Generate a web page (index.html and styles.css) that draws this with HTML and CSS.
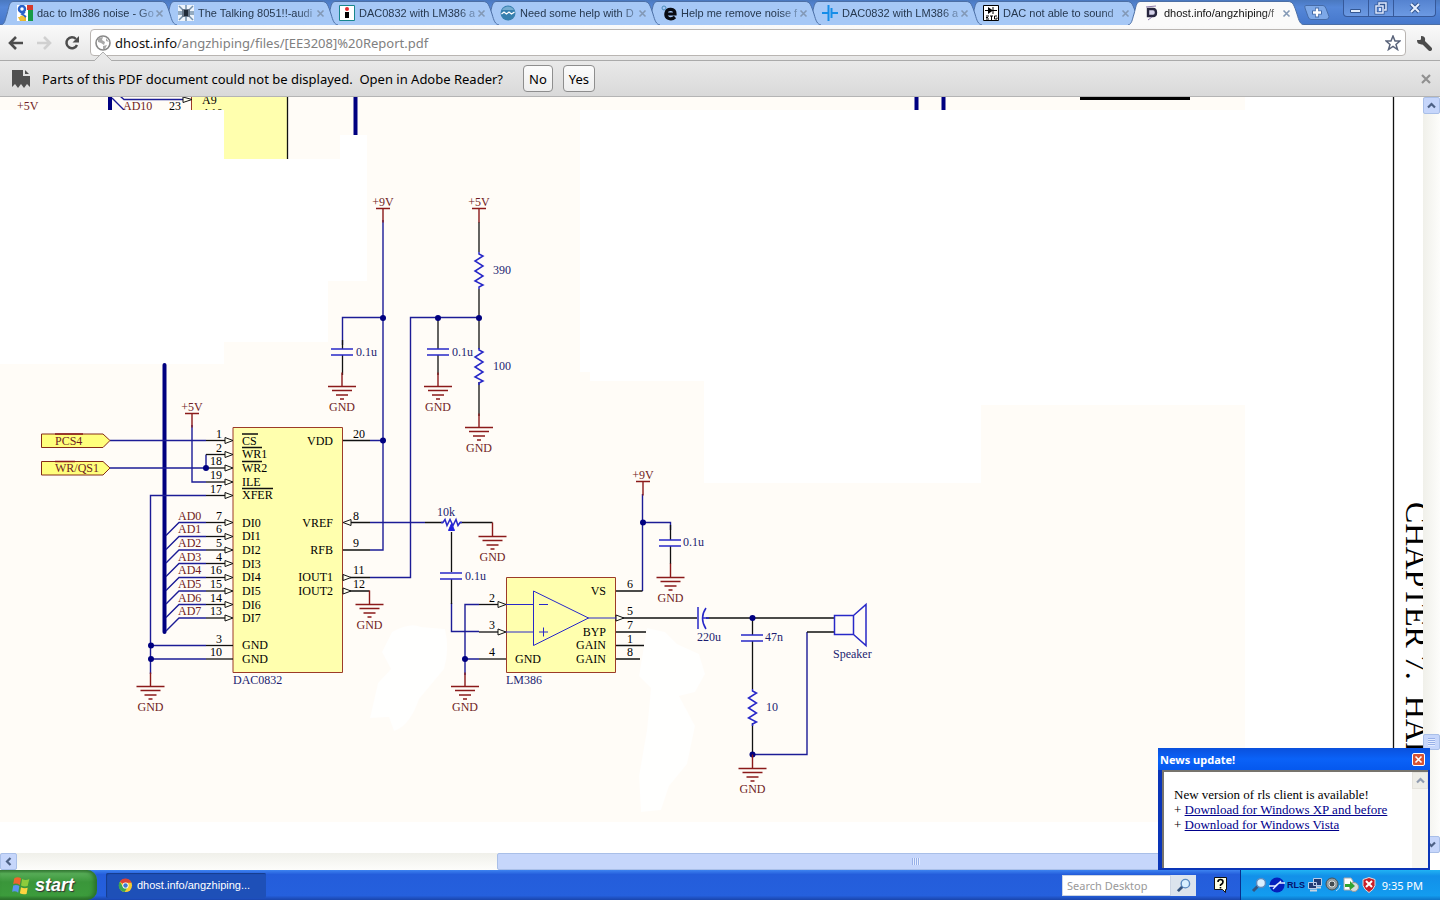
FILE: index.html
```
<!DOCTYPE html>
<html lang="en">
<head>
	<meta charset="UTF-8">
	<meta name="viewport" content="width=device-width, initial-scale=1">
	<title>dhost.info/angzhiping/files/[EE3208]%20Report.pdf</title>
	<link rel="stylesheet" href="styles.css">
</head>
<body>

<!-- shared shapes -->
<svg class="defs" aria-hidden="true">
	<symbol id="tab-shape" viewBox="0 0 176 25" preserveAspectRatio="none">
		<path d="M0 25 C4 24 4 20 6 14 C8 7 8 2 12 1.500 H160 C165 1.500 166 5 169 14 C171 21 172 24 176 25" stroke="#4c6fa5" stroke-width="1"/>
	</symbol>
	<symbol id="cross" viewBox="0 0 9 9"><path d="M1.500 1.500 L7.500 7.500 M7.500 1.500 L1.500 7.500" fill="none" stroke="currentColor" stroke-width="1.600"/></symbol>
	<symbol id="arrow" viewBox="0 0 9 9"><path d="M1 6.500 L4.500 3 L8 6.500" fill="none" stroke="#4d6185" stroke-width="2.200"/></symbol>
	<symbol id="magnifier" viewBox="0 0 16 16"><path d="M7 9 L2 14" stroke="#35557f" stroke-width="3"/><circle cx="10" cy="6" r="4.500" fill="#d9f0ff" stroke="#5b8bc0" stroke-width="1.500"/></symbol>
</svg>

<header class="tabbar">
	<nav class="tabs">
		<div class="tab">
			<svg class="shape"><use href="#tab-shape"/></svg>
			<svg class="fav" viewBox="0 0 16 16"><path fill="#fff" d="M0 0h16v16H0z"/><path fill="#d63a2c" d="M10 0h6v5h-6z"/><path fill="#169b46" d="M11 5h5v11h-5z"/><path fill="#eab52a" d="M1 12h8v4H3z"/><circle cx="5" cy="4" r="3" fill="none" stroke="#2862c9" stroke-width="2.500"/><path d="M8 7 5 9l4 3" fill="none" stroke="#2862c9" stroke-width="2"/><circle cx="5" cy="13" r="2.500" fill="#f0c23c"/></svg>
			<a href="#">dac to lm386 noise - Go</a>
			<button aria-label="Close tab"><svg><use href="#cross"/></svg></button>
		</div>
		<div class="tab">
			<svg class="shape"><use href="#tab-shape"/></svg>
			<svg class="fav" viewBox="0 0 16 16"><path fill="#eef4fb" d="M0 0h16v16H0z"/><path d="M1 1l4 4M15 1l-4 4M1 15l4-4M15 15l-4-4M0 7h4M0 9h4M12 7h4M12 9h4M8 0v4M8 12v4" stroke="#7591ac" stroke-width="1.500"/><path fill="#68788a" d="M4 4h8v8H4z"/><path fill="#202b38" d="M6 5h4v6H6z"/></svg>
			<a href="#">The Talking 8051!!-audi</a>
			<button aria-label="Close tab"><svg><use href="#cross"/></svg></button>
		</div>
		<div class="tab">
			<svg class="shape"><use href="#tab-shape"/></svg>
			<svg class="fav" viewBox="0 0 16 16"><path fill="#fff" stroke="#17868c" d="M.5.5h15v15H.5z"/><circle cx="8" cy="4" r="2" fill="#e12c32"/><path d="M6 7h4v6H6z"/></svg>
			<a href="#">DAC0832 with LM386 a</a>
			<button aria-label="Close tab"><svg><use href="#cross"/></svg></button>
		</div>
		<div class="tab">
			<svg class="shape"><use href="#tab-shape"/></svg>
			<svg class="fav" viewBox="0 0 16 16"><circle cx="8" cy="8" r="7.500" fill="#367fae"/><path d="M2 5a7 7 0 0 1 12 0" fill="#75acd0"/><path d="M1.500 9l2.500-2 2.500 2 2.500-2 2.500 2 3-2" fill="none" stroke="#fff" stroke-width="1.300"/></svg>
			<a href="#">Need some help with D</a>
			<button aria-label="Close tab"><svg><use href="#cross"/></svg></button>
		</div>
		<div class="tab">
			<svg class="shape"><use href="#tab-shape"/></svg>
			<svg class="fav" viewBox="0 0 16 16"><path d="M14 12c-4 4-10 1-9-4s9-5 9 1H6" fill="none" stroke="#080b12" stroke-width="3.200"/><circle cx="3" cy="3" r="2" fill="none" stroke="#4c8cb8"/></svg>
			<a href="#">Help me remove noise f</a>
			<button aria-label="Close tab"><svg><use href="#cross"/></svg></button>
		</div>
		<div class="tab">
			<svg class="shape"><use href="#tab-shape"/></svg>
			<svg class="fav" viewBox="0 0 16 16"><path d="M0 8h6M10 8h6M6.500 0v16M9.500 3v10" stroke="#158de8" stroke-width="2"/></svg>
			<a href="#">DAC0832 with LM386 a</a>
			<button aria-label="Close tab"><svg><use href="#cross"/></svg></button>
		</div>
		<div class="tab">
			<svg class="shape"><use href="#tab-shape"/></svg>
			<svg class="fav" viewBox="0 0 16 16"><path fill="#fff" stroke="#000" d="M.5.5h15v15H.5z"/><path d="M2 5.500h12M10 2v7M3 11h3M3 12.500h2M3 14h3M7 11h3M8.500 11v4M14 11h-2.500v3H14v-1.500" stroke="#000" fill="none"/><path d="M5 2l5 3.500L5 9z"/></svg>
			<a href="#">DAC not able to sound</a>
			<button aria-label="Close tab"><svg><use href="#cross"/></svg></button>
		</div>
		<div class="tab active">
			<svg class="shape"><use href="#tab-shape"/></svg>
			<svg class="fav" viewBox="0 0 16 16"><path d="M4 4h5q3 0 3 3.500T9 11H4z" fill="#d5d2ea" stroke="#27263f" stroke-width="2.400"/><path d="M2 2l10-1M4 15l4-3" stroke="#8b78a9"/></svg>
			<a href="#">dhost.info/angzhiping/f</a>
			<button aria-label="Close tab"><svg><use href="#cross"/></svg></button>
		</div>
	</nav>
	<button class="newtab" aria-label="New tab"><svg viewBox="0 0 26 15"><path d="M2 .5h17q2 0 3 3l3 8q0 3-3 3H7q-2 0-3-3L1 3Q0 .5 2 .5z" fill="#7da8e7" stroke="#466ca8"/><path d="M8 7.500h10M13 2.500v10" stroke="#446ba8" stroke-width="4"/><path d="M9 7.500h8M13 3.500v8" stroke="#fff" stroke-width="2.400"/></svg></button>
	<div class="wincontrols">
		<button aria-label="Minimize"><svg viewBox="0 0 14 14"><path d="M1.500 8.500h10v3h-10z" fill="#e2edfc" stroke="#345792"/></svg></button>
		<button aria-label="Restore"><svg viewBox="0 0 14 14"><path d="M5 4V2h7v7h-2M2 5h7v7H2z" fill="none" stroke="#345792" stroke-width="3"/><path d="M5 4V2h7v7h-2M2 5h7v7H2z" fill="none" stroke="#dfeaff" stroke-width="1.500"/><path fill="#dfeaff" d="M5 7h2v3H5z"/></svg></button>
		<button class="wide" aria-label="Close"><svg viewBox="0 0 14 14"><path d="M3 3l8 8M11 3l-8 8" stroke="#345792" stroke-width="4"/><path d="M3 3l8 8M11 3l-8 8" stroke="#e7f0ff" stroke-width="2"/></svg></button>
	</div>
</header>

<div class="toolbar">
	<button aria-label="Back"><svg viewBox="0 0 16 16"><path d="M15 8H3M8 2L2 8l6 6" fill="none" stroke="#4d4d4d" stroke-width="2.600"/></svg></button>
	<button aria-label="Forward"><svg viewBox="0 0 16 16"><path d="M1 8h12M8 2l6 6-6 6" fill="none" stroke="#d0d0d0" stroke-width="2.600"/></svg></button>
	<button aria-label="Reload"><svg viewBox="0 0 16 16"><path d="M13 10a5.500 5.500 0 1 1-1-6" fill="none" stroke="#4d4d4d" stroke-width="2.500"/><path d="M15 1v6.500H8.500z" fill="#4d4d4d"/></svg></button>
	<div class="omnibox">
		<svg class="globe" viewBox="0 0 16 16"><circle cx="8" cy="8" r="7" fill="#fff" stroke="#888" stroke-width="1.600"/><path d="M3 3l5-1-1 3 3 2-1 3-3-2-3-1zM11 3l3 4-3-1zM8 11l4-1-2 4H8z" fill="#a9a9a9"/></svg>
		<a class="url" href="#">dhost.info<span>/angzhiping/files/[EE3208]%20Report.pdf</span></a>
		<button aria-label="Bookmark"><svg viewBox="0 0 16 16"><path d="M8 1l2 5h5l-4 3.500 1.500 5L8 11.500l-4.500 3 1.500-5L1 6h5z" fill="#fff" stroke="#59637a" stroke-width="1.500"/></svg></button>
	</div>
	<button aria-label="Settings"><svg viewBox="0 0 16 16"><path d="M6 6l8 8" stroke="#4c4c4c" stroke-width="4" stroke-linecap="round"/><path d="M1 5L5 5 5 1Q10 1 9 6T4 9Q1 9 1 5z" fill="#4c4c4c"/></svg></button>
</div>

<div class="infobar">
	<svg class="notch" viewBox="0 0 18 9"><path d="M0 9L9 0l9 9" fill="#e9e9e9" stroke="#b0b0b0"/></svg>
	<svg class="pdficon" viewBox="0 0 18 20"><path d="M0 1h11v6h7v11l-3-3-3 4-3-4-3 4-3-4-3 3z" fill="#505050"/><path d="M13 1l4 4h-4z" fill="#505050"/></svg>
	<p>Parts of this PDF document could not be displayed.&nbsp; Open in Adobe Reader?</p>
	<button>No</button>
	<button>Yes</button>
	<button class="dismiss" aria-label="Dismiss"><svg><use href="#cross"/></svg></button>
</div>

<main class="viewer">
	<div class="page">
	<svg class="schematic" width="1423" height="756" viewBox="0 97 1423 756">
		<defs>
			<clipPath id="strip"><path d="M0 97h1245v13H0z"/></clipPath>
			<g id="gnd"><path class="red" d="M0-14V0M-14 0h28M-10 4h20M-6 8.500h12M-2 12.500h4"/><text class="t-red mid" y="24">GND</text></g>
			<g id="pwr"><path class="red" d="M-7 0H7M0 0v14"/></g>
			<g id="pin"><path class="blk" d="M-27 0H0"/></g>
			<g id="pin-in"><path class="blk" d="M-27 0h19"/><path class="tri" d="M-8-3L0 0-8 3z"/></g>
			<g id="tap"><path class="wire" d="M-67 13l13-13h27"/><use href="#pin-in"/></g>
			<g id="cap"><path class="part" d="M-11-3h22M-11 3h22"/></g>
			<g id="res"><path class="part" d="M0-18v2l4 2-8 5 8 5-8 5 8 5-8 5 8 4-4 2v2"/></g>
		</defs>

		<!-- paper tint -->
		<path class="paper" d="M0 97h1245v725H0z"/>
		<path class="blank" d="M0 110H224V159H340V135H367V281H328V342H224V364H0z"/>
		<path class="blank" d="M580 110H1245V405H981V483H704V381H590V372H580z"/>
		<path class="blank soft" d="M392 632q18-10 29-5l24 2q5 20-1 40l-25 30q-9 27-25 32l-5-14-19 1 8-35 13-14-9-17z"/>
		<path class="blank soft" d="M647 628l18 4 12 12 22 10 6 20-10 18-16 4 16 30-8 38-18 22-8 24-20 2-2-36 8-46 4-42-12-12z"/>

		<!-- cut off parts at the top -->
		<g clip-path="url(#strip)">
			<path class="chip" d="M191.500 90h96v80h-96z"/>
			<path class="bus" d="M110 90v30"/>
			<path class="wire" d="M112 98l12 12M120 96l4 3.500h60"/>
			<path class="tri" d="M183 97l9 2.500-9 3z"/>
			<text class="t-red" x="17" y="110">+5V</text>
			<text class="t-red" x="123" y="110">AD10</text>
			<text x="169" y="110">23</text>
			<text x="202" y="104">A9</text>
			<text x="202" y="117">A10</text>
			<path class="bus" d="M916.500 97v20M943.500 97v20"/>
		</g>
		<path fill="#ffffae" d="M224 97h63v62h-63z"/>
		<path class="blk" d="M287.500 97v62"/>
		<path class="bus" d="M355.500 97v38"/>
		<path fill="#000" d="M1080 97h110v3h-110z"/>

		<!-- wires -->
		<path class="bus" d="M164.500 365v267" stroke-linecap="round"/>
		<path class="wire" d="M110 440.500h96M110 468h96M206 468v-13.500M192 425v57h14M206 495.500h-55.500V674M150.500 645.500H206M150.500 659H206"/>
		<path class="wire" d="M383 220v330H370M342.500 345v-27.500H383M370 440.500h13M370 522.500h55M370 577.500h40.500v-260H479M670.500 530v-7.500h-28M642.500 494v97"/>
		<path class="wire" d="M451.500 603v28.500H479M479 604.500h-14V675M465 659h14M752.500 754.500H807V632"/>
		<path class="blk" d="M342.500 440.500H370M350 522.500h20M342.500 550H370M350 577.500h20M350 591h19.500M425 522.500h18M460 522.500h32.500M451.500 532v40M451.500 579v25M342.500 340v9M342.500 355v20M438 318v31M438 355v20M479 222v30M479 289v60M479 382v34M615.500 591h27M622 618h75M615.500 632H646M615.500 645.500H644M615.500 659H640M670.500 525v15M670.500 546v18M706 618H835M807 632h28M752.500 618v17M752.500 641v48M752.500 723v32"/>

		<!-- DAC0832 -->
		<path class="chip" d="M233 427.500h109.500v245H233z"/>
		<g>
			<use href="#pin-in" x="233" y="440.500"/><use href="#pin-in" x="233" y="454.500"/><use href="#pin-in" x="233" y="468"/><use href="#pin-in" x="233" y="482"/><use href="#pin-in" x="233" y="495.500"/>
			<use href="#tap" x="233" y="522.500"/><use href="#tap" x="233" y="536.500"/><use href="#tap" x="233" y="550"/><use href="#tap" x="233" y="563.500"/><use href="#tap" x="233" y="577.500"/><use href="#tap" x="233" y="591"/><use href="#tap" x="233" y="604.500"/><use href="#tap" x="233" y="618"/>
			<use href="#pin" x="233" y="645.500"/><use href="#pin" x="233" y="659"/>
			<path class="tri" d="M351 519.500l-8 3 8 3zM343 574.500l8 3-8 3zM343 588l8 3-8 3z"/>
		</g>
		<path class="blk" d="M242 434h16M242 447.500h20M242 461.500h20M242 488.500h31"/>
		<g>
			<text x="242" y="445">CS</text><text x="242" y="458">WR1</text><text x="242" y="472">WR2</text><text x="242" y="486">ILE</text><text x="242" y="499">XFER</text>
			<text x="242" y="527">DI0</text><text x="242" y="540">DI1</text><text x="242" y="554">DI2</text><text x="242" y="568">DI3</text><text x="242" y="581">DI4</text><text x="242" y="595">DI5</text><text x="242" y="609">DI6</text><text x="242" y="622">DI7</text>
			<text x="242" y="649">GND</text><text x="242" y="663">GND</text>
		</g>
		<g class="end">
			<text x="333" y="445">VDD</text><text x="333" y="527">VREF</text><text x="333" y="554">RFB</text><text x="333" y="581">IOUT1</text><text x="333" y="595">IOUT2</text>
			<text x="222" y="438">1</text><text x="222" y="452">2</text><text x="222" y="465">18</text><text x="222" y="479">19</text><text x="222" y="493">17</text>
			<text x="222" y="520">7</text><text x="222" y="533">6</text><text x="222" y="547">5</text><text x="222" y="561">4</text><text x="222" y="574">16</text><text x="222" y="588">15</text><text x="222" y="602">14</text><text x="222" y="615">13</text>
			<text x="222" y="643">3</text><text x="222" y="656">10</text>
		</g>
		<text x="353" y="438">20</text><text x="353" y="520">8</text><text x="353" y="547">9</text><text x="353" y="574">11</text><text x="353" y="588">12</text>
		<g class="t-red">
			<text x="178" y="520">AD0</text><text x="178" y="533">AD1</text><text x="178" y="547">AD2</text><text x="178" y="561">AD3</text><text x="178" y="574">AD4</text><text x="178" y="588">AD5</text><text x="178" y="602">AD6</text><text x="178" y="615">AD7</text>
		</g>
		<path class="port" d="M41.500 434H103l7 6.500-7 7H41.500zM41.500 461.500H103l7 6.500-7 7H41.500z"/>
		<path class="red" d="M55 434h28M55 461.500h20"/>
		<text class="t-red" x="55" y="445">PCS4</text><text class="t-red" x="55" y="472">WR/QS1</text>
		<text class="t-blue" x="233" y="684">DAC0832</text>

		<!-- LM386 -->
		<path class="chip" d="M506.500 577.500h109v95h-109z"/>
		<use href="#pin-in" x="506" y="604.500"/><use href="#pin-in" x="506" y="632"/><use href="#pin" x="506" y="659"/>
		<path class="tri" d="M616 615l8 3-8 3z"/>
		<path class="part thin" d="M533.500 591v54.500L588.500 618zM506 604.500h27M506 632h27M588 618h28M539 604.500h9M539 632h9M543.500 627.500v9"/>
		<text x="489" y="602">2</text><text x="489" y="629">3</text><text x="489" y="656">4</text><text x="515" y="663">GND</text>
		<g class="end"><text x="606" y="595">VS</text><text x="606" y="636">BYP</text><text x="606" y="649">GAIN</text><text x="606" y="663">GAIN</text></g>
		<text x="627" y="588">6</text><text x="627" y="615">5</text><text x="627" y="629">7</text><text x="627" y="643">1</text><text x="627" y="656">8</text>
		<text class="t-blue" x="506" y="684">LM386</text>

		<!-- parts -->
		<use href="#cap" x="342" y="352"/><use href="#cap" x="438" y="352"/><use href="#cap" x="451" y="576"/><use href="#cap" x="670" y="543"/><use href="#cap" x="752" y="638"/>
		<use href="#res" x="479" y="270"/><use href="#res" x="479" y="366"/><use href="#res" x="752.500" y="707"/>
		<path class="part" d="M441 522.500h2l2-3 2 6 3-6 3 6 3-6 2 6 2-3h2M698 607v22M706 608q-7 10 0 21M703 618h6"/>
		<path d="M451.500 523.500l3 7h-6z" fill="#22d" stroke="#22d"/>
		<path class="part" d="M834.500 615.500h19v19h-19zM853.500 615.500l12.500-11v41l-12.500-11"/>
		<g fill="#000080"><circle cx="383" cy="318" r="3"/><circle cx="438" cy="318" r="3"/><circle cx="479" cy="318" r="3"/><circle cx="383" cy="440.500" r="3"/><circle cx="206" cy="468" r="3"/><circle cx="151" cy="645.500" r="3"/><circle cx="151" cy="659" r="3"/><circle cx="643" cy="522.500" r="3"/><circle cx="465" cy="659" r="3"/><circle cx="752.500" cy="618" r="3"/><circle cx="752.500" cy="754.500" r="3"/></g>
		<use href="#pwr" x="383" y="208.500"/><use href="#pwr" x="479" y="208.500"/><use href="#pwr" x="192" y="413.500"/><use href="#pwr" x="643" y="481.500"/>
		<g class="t-red mid"><text x="383" y="206">+9V</text><text x="479" y="206">+5V</text><text x="192" y="411">+5V</text><text x="643" y="479">+9V</text></g>
		<use href="#gnd" x="342" y="386.500"/><use href="#gnd" x="438" y="386.500"/><use href="#gnd" x="479" y="427.500"/><use href="#gnd" x="369.500" y="604.500"/><use href="#gnd" x="492.500" y="536.500"/><use href="#gnd" x="150.500" y="686.500"/><use href="#gnd" x="465" y="686.500"/><use href="#gnd" x="670.500" y="577.500"/><use href="#gnd" x="752.500" y="768.500"/>
		<g class="t-blue">
			<text x="356" y="356">0.1u</text><text x="452" y="356">0.1u</text><text x="493" y="274">390</text><text x="493" y="370">100</text><text x="437" y="516">10k</text><text x="465" y="580">0.1u</text><text x="683" y="546">0.1u</text><text x="697" y="641">220u</text><text x="765" y="641">47n</text><text x="766" y="711">10</text><text x="833" y="658">Speaker</text>
		</g>

		<path class="blk" d="M1393.500 97v756"/>
		<text class="chapter" transform="translate(1406 502) rotate(90)">CHAPTER 7.&nbsp; HAR</text>
	</svg>
	</div>
	<div class="vscroll">
		<button aria-label="Scroll up"><svg><use href="#arrow"/></svg></button>
		<span class="thumb"></span>
		<button class="down" aria-label="Scroll down"><svg><use href="#arrow"/></svg></button>
	</div>
	<div class="hscroll">
		<button class="left" aria-label="Scroll left"><svg><use href="#arrow"/></svg></button>
		<span class="thumb"></span>
	</div>
</main>

<footer class="taskbar">
	<button class="start"><svg viewBox="0 0 18 18"><path d="M3 3q3-2 6 0L8 9Q5 7 2 8z" fill="#f0642d"/><path d="M10 3.500q3 2 6.500 0L15 10q-3 1-6-.5z" fill="#8ccc3c"/><path d="M2 9.500q3-1 5.500.5L6.500 16Q4 14 1 15z" fill="#5a95ee"/><path d="M9 11q3 1.500 6 .5L14 17q-3 1-6-.5z" fill="#fcd440"/></svg>start</button>
	<button class="task"><svg viewBox="0 0 16 16"><circle cx="8" cy="8" r="7" fill="#f4cc32"/><path d="M8 8L2 4a7 7 0 0 1 12.500 1H8z" fill="#dc4335"/><path d="M2 4a7 7 0 0 0 5 11l3-5-5-1z" fill="#3ba651"/><circle cx="8" cy="8" r="3.300" fill="#fff"/><circle cx="8" cy="8" r="2.400" fill="#3e77cf"/></svg>dhost.info/angzhiping...</button>
	<div class="search">
		<input type="text" placeholder="Search Desktop" aria-label="Search Desktop">
		<button aria-label="Search"><svg viewBox="0 0 16 16"><use href="#magnifier"/></svg></button>
	</div>
	<button class="help" aria-label="Help"><svg viewBox="0 0 14 16"><path d="M.5.5h12v12h-1v3l-3-3h-8z" fill="#ffffe4" stroke="#111"/><path d="M4 5q0-2.500 2.500-2.500T9 5q0 1.500-2.500 3v1M6.500 10v1.500" fill="none" stroke="#000" stroke-width="1.600"/></svg></button>
	<div class="tray">
		<svg viewBox="0 0 16 16"><use href="#magnifier"/></svg>
		<svg viewBox="0 0 16 16"><circle cx="8" cy="8" r="7.500" fill="#0420bd"/><path d="M0 9h6l4-3h6M4 12l8-8" fill="none" stroke="#e2edff" stroke-width="1.300"/></svg>
		<b>RLS</b>
		<svg viewBox="0 0 16 16"><path fill="#213b73" stroke="#b9cde8" d="M6.500 1.500h8v7h-8zM1.500 5.500h8v6h-8z"/><path d="M3 13.500h7M9 10.500h5" stroke="#cbd3df" stroke-width="2"/></svg>
		<svg viewBox="0 0 16 16"><circle cx="7" cy="7" r="6" fill="#939b9e" stroke="#465256"/><circle cx="7" cy="7" r="3" fill="#424a50" stroke="#dce1e2"/><path d="M11 14q4-2 4-6" fill="none" stroke="#b1dfff"/></svg>
		<svg viewBox="0 0 16 16"><path d="M1 1h7l2 3v9H1z" fill="#fff" stroke="#aaa"/><circle cx="11" cy="10" r="4.500" fill="#d8ded9" stroke="#999"/><path d="M2 7h5V4l5 5-5 4v-3H2z" fill="#31a431"/></svg>
		<svg viewBox="0 0 16 16"><path d="M8 .5l6 2v6q-1 4-6 7-5-3-6-7v-6z" fill="#c91e28" stroke="#ddd"/><path d="M5 4l6 6M11 4l-6 6" stroke="#fff" stroke-width="2"/></svg>
		<time>9:35 PM</time>
	</div>
</footer>

<aside class="popup">
	<header><h2>News update!</h2><button aria-label="Close"><svg><use href="#cross"/></svg></button></header>
	<div class="popup-body">
		<div class="news">
			<p>New version of rls client is available!</p>
			<p>+ <a href="#">Download for Windows XP and before</a></p>
			<p>+ <a href="#">Download for Windows Vista</a></p>
		</div>
		<div class="popup-scroll"><button aria-label="Scroll up"><svg><use href="#arrow"/></svg></button></div>
	</div>
</aside>

</body>
</html>
```
FILE: styles.css
```
* {
	box-sizing: border-box;
}

body {
	margin: 0;
	height: 100vh;
	display: flex;
	flex-direction: column;
	overflow: hidden;
	background: #fff;
	font-family: "Noto Sans", Tahoma, sans-serif;
	font-size: 12px;
}

button {
	padding: 0;
	border: 0;
	background: none;
	font: inherit;
	display: flex;
	align-items: center;
	justify-content: center;
}

a {
	color: inherit;
	text-decoration: none;
}

p {
	margin: 0;
}

.defs {
	position: absolute;
	width: 0;
	height: 0;
}

/* tabs */
.tabbar {
	display: flex;
	height: 25px;
	flex: none;
	background: linear-gradient(#4a78bf, #5587d8 30%, #4678cc);
	border-bottom: 1px solid #4c6fa5;
}

.tabs {
	display: flex;
	flex: 0 1 1304px;
	min-width: 0;
	padding-left: 1px;
}

.tab {
	position: relative;
	isolation: isolate;
	display: flex;
	align-items: center;
	flex: 0 1 176px;
	min-width: 0;
	height: 25px;
	margin-right: -15px;
	padding: 1px 13px 0 16px;
	color: #26384f;
	font-family: "Liberation Sans", Tahoma, sans-serif;
	font-size: 11px;
}

.tab:nth-child(1) { z-index: 8; }
.tab:nth-child(2) { z-index: 7; }
.tab:nth-child(3) { z-index: 6; }
.tab:nth-child(4) { z-index: 5; }
.tab:nth-child(5) { z-index: 4; }
.tab:nth-child(6) { z-index: 3; }
.tab:nth-child(7) { z-index: 2; }

.tab.active {
	z-index: 9;
	color: #111;
	margin-right: 0;
}

.shape {
	position: absolute;
	inset: 0;
	z-index: -1;
	width: 100%;
	height: 100%;
	fill: #a6c8f6;
}

.active .shape {
	fill: #fafafa;
}

.fav {
	width: 16px;
	height: 16px;
	flex: none;
	margin-right: 4px;
}

.tab a {
	flex: 1;
	min-width: 0;
	overflow: hidden;
	white-space: nowrap;
	-webkit-mask-image: linear-gradient(to right, #000 85%, rgba(0, 0, 0, .3));
	mask-image: linear-gradient(to right, #000 85%, rgba(0, 0, 0, .3));
}

.tab button {
	width: 10px;
	height: 16px;
	color: #8298b5;
}

.tab button svg {
	width: 9px;
	height: 9px;
}

.newtab svg {
	width: 26px;
	height: 15px;
}

.wincontrols {
	display: flex;
	margin: 0 4px 0 auto;
	height: 17px;
	border: 1px solid #36599a;
	border-top: 0;
	border-radius: 0 0 4px 4px;
	background: linear-gradient(#5583d0, #6c9ae3);
}

.wincontrols button {
	width: 25px;
	border-right: 1px solid #36599a;
}

.wincontrols .wide {
	width: 41px;
	border: 0;
}

.wincontrols svg {
	width: 14px;
	height: 14px;
}

/* toolbar */
.toolbar {
	display: flex;
	align-items: center;
	gap: 12px;
	flex: none;
	height: 36px;
	padding: 0 8px;
	background: linear-gradient(#fafafa, #e6e6e6);
	border-bottom: 1px solid #aaa;
}

.toolbar svg {
	width: 16px;
	height: 16px;
}

.omnibox {
	flex: 1;
	display: flex;
	align-items: center;
	gap: 4px;
	height: 27px;
	margin: 0 -2px;
	padding: 0 4px;
	border: 1px solid #b9b5b2;
	border-radius: 4px;
	background: #fff;
}

.url {
	flex: 1;
	font-size: 13px;
	color: #111;
}

.url span {
	color: #808080;
}

/* infobar */
.infobar {
	position: relative;
	display: flex;
	align-items: center;
	flex: none;
	height: 36px;
	padding: 0 8px 0 12px;
	background: linear-gradient(#e9e9e9, #d9d9d9);
	border-bottom: 1px solid #b4b4b4;
	font-size: 13px;
}

/* little pointer up to the page icon */
.notch {
	position: absolute;
	left: 94px;
	top: -9px;
	width: 18px;
	height: 9px;
}

.pdficon {
	width: 18px;
	height: 20px;
	margin-right: 12px;
}

.infobar p {
	margin-right: 20px;
}

.infobar button {
	height: 27px;
	padding: 0 5px;
	margin-right: 10px;
	border: 1px solid #8e8e8e;
	border-radius: 4px;
	background: linear-gradient(#fcfcfc, #eee);
}

.infobar .dismiss {
	margin: 0 0 0 auto;
	padding: 0;
	border: 0;
	background: none;
	color: #909090;
}

.dismiss svg {
	width: 12px;
	height: 12px;
}

/* pdf viewer */
.viewer {
	flex: 1;
	min-height: 0;
	display: grid;
	grid-template-columns: minmax(0, 1fr) 17px;
	grid-template-rows: minmax(0, 1fr) 17px;
}

.page {
	overflow: hidden;
}

.schematic {
	display: block;
	font-family: "Liberation Serif", serif;
	font-size: 12px;
}

.paper { fill: #fffcf7; }
.blank { fill: #fff; }
.soft { opacity: .8; }
.chip { fill: #ffffae; stroke: #9c3b28; }
.port { fill: #ffff7c; stroke: #852c18; }
.wire { fill: none; stroke: #1c1c96; stroke-width: 1.4px; }
.bus { fill: none; stroke: #000080; stroke-width: 4px; }
.blk { fill: none; stroke: #111; stroke-width: 1.3px; }
.red { fill: none; stroke: #8b1a1a; stroke-width: 1.4px; }
.part { fill: none; stroke: #2828c8; stroke-width: 1.5px; }
.part.thin { stroke-width: 1px; }
.tri { fill: #fffff0; stroke: #111; }
.t-red { fill: #701c24; }
.t-blue { fill: #1c1c70; }
.mid { text-anchor: middle; }
.end { text-anchor: end; }
.chapter { font-size: 32px; }

.vscroll,
.hscroll {
	display: flex;
	background: linear-gradient(to right, #f0f0ea, #fdfdfb);
}

.vscroll {
	flex-direction: column;
}

.hscroll {
	background: linear-gradient(#f0f0ea, #fdfdfb);
}

.vscroll button,
.hscroll button,
.thumb {
	border: 1px solid #a9bfe8;
	border-radius: 2px;
	background: #c6d6fb;
}

.vscroll button,
.hscroll button {
	flex: none;
	width: 17px;
	height: 17px;
}

.vscroll svg,
.hscroll svg,
.popup-scroll svg {
	width: 9px;
	height: 9px;
}

.down svg { transform: rotate(180deg); }
.left svg { transform: rotate(-90deg); }

.vscroll .thumb {
	height: 16px;
	margin: auto 0 86px;
	background: repeating-linear-gradient(#98b0e8 0 1px, #e4edff 1px 2px) center / 7px 8px no-repeat #c6d6fb;
}

.hscroll .thumb {
	width: 59%;
	margin-left: 33.7%;
	background: repeating-linear-gradient(to right, #98b0e8 0 1px, #e4edff 1px 2px) center / 8px 7px no-repeat #c6d6fb;
}

/* taskbar */
.taskbar {
	display: flex;
	align-items: center;
	flex: none;
	height: 30px;
	color: #fff;
	background: linear-gradient(#3d83f0, #245ddb 15%, #2560dd 85%, #1a45ac);
}

.start {
	width: 97px;
	height: 30px;
	padding-right: 12px;
	gap: 4px;
	border-radius: 0 10px 10px 0;
	background: linear-gradient(#3c7f3c, #57ac57 12%, #3a963a 40%, #3c9c3c 85%, #2b702b);
	box-shadow: inset -3px 0 4px #2a702a;
	color: #fff;
	font: italic bold 18px "Liberation Sans", sans-serif;
	text-shadow: 1px 1px 1px #333;
}

.start svg {
	width: 20px;
	height: 20px;
}

.task {
	width: 160px;
	height: 25px;
	margin-left: 9px;
	padding-left: 12px;
	justify-content: flex-start;
	gap: 4px;
	border-radius: 2px;
	background: #1e50b8;
	box-shadow: inset 1px 1px 1px #163c8c;
	color: #fff;
	font: 11px "Liberation Sans", Tahoma, sans-serif;
}

.task svg {
	width: 15px;
	height: 15px;
}

.search {
	display: flex;
	height: 21px;
	margin-left: auto;
}

.search input {
	width: 109px;
	padding: 0 4px;
	border: 1px solid #ccd5e3;
	background: #fff;
	font-family: inherit;
	font-size: 11px;
}

.search input::placeholder {
	color: #999;
}

.search button {
	width: 25px;
	background: #dce4ed;
}

.search svg {
	width: 15px;
	height: 15px;
}

.help {
	margin: 0 12px 0 18px;
}

.help svg {
	width: 14px;
	height: 16px;
}

.tray {
	display: flex;
	align-items: center;
	gap: 2px;
	width: 200px;
	height: 30px;
	padding: 0 17px 0 10px;
	background: linear-gradient(#21b3f3, #1290e9 20%, #139cef 85%, #0d75c8);
	border-left: 1px solid #092e8c;
}

.tray svg {
	width: 16px;
	height: 16px;
}

.tray b {
	font: bold 9px "Liberation Sans", sans-serif;
	color: #06126e;
}

.tray time {
	margin-left: auto;
	font-size: 11px;
	white-space: nowrap;
}

/* news popup, floats over the page */
.popup {
	position: absolute;
	right: 10px;
	bottom: 30px;
	z-index: 20;
	display: flex;
	flex-direction: column;
	width: 272px;
	height: 122px;
	padding: 0 2px 2px;
	background: #0a35b8;
}

.popup header {
	display: flex;
	align-items: center;
	justify-content: space-between;
	height: 22px;
	margin: 0 -2px;
	padding: 0 5px 0 2px;
	background: linear-gradient(#0a50dc, #0a62f8 50%, #0558ee);
	color: #fff;
}

.popup h2 {
	margin: 0;
	font-size: 11px;
}

.popup header button {
	width: 13px;
	height: 13px;
	border: 1px solid #fff;
	border-radius: 2px;
	background: #d75433;
	color: #fff;
}

.popup header svg {
	width: 9px;
	height: 9px;
}

.popup-body {
	flex: 1;
	display: flex;
	margin-left: 2px;
	border: 2px solid #77746d;
	border-width: 2px 0 0 2px;
	background: #fff;
}

.news {
	flex: 1;
	padding: 15px 0 0 10px;
	font: 13px/15px "Liberation Serif", serif;
	white-space: nowrap;
}

.news a {
	color: #00008b;
	text-decoration: underline;
}

.popup-scroll {
	width: 16px;
	background: #f7f6f2;
}

.popup-scroll button {
	width: 16px;
	height: 17px;
	background: #e9e8e1;
	border: 1px solid #dad8cf;
	opacity: .6;
}
```
